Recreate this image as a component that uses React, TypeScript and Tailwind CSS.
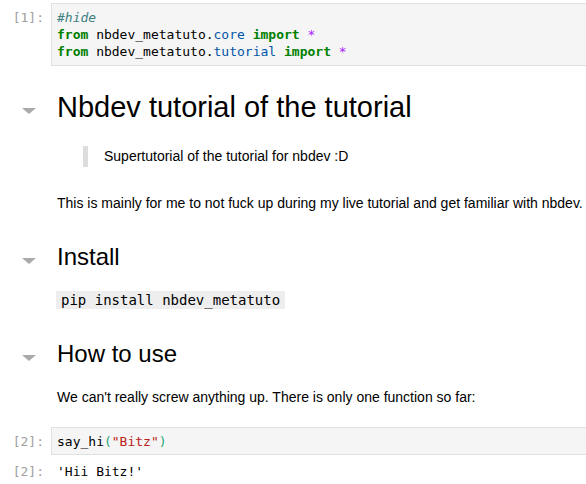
export default function App() {
  const mono = "font-['DejaVu_Sans_Mono',monospace]";
  const sans = "font-['Liberation_Sans',Arial,sans-serif]";

  const Caret = () => (
    <svg width="14" height="6" viewBox="0 0 14 6" className="absolute left-[22px] top-1/2 mt-[1px]">
      <path d="M0 0 L14 0 L7 6 Z" fill="#aaaaaa" />
    </svg>
  );

  return (
    <div className={`h-[484px] w-[586px] overflow-hidden bg-white pt-[3px] text-black ${sans}`}>
      {/* CELL 1 */}
      <div className="flex">
        <div className={`w-[51px] shrink-0 pr-[7px] pt-[6px] text-right text-[13px] leading-[17px] text-[#9e9e9e] ${mono}`}>
          [1]:
        </div>
        <div className={`w-[600px] shrink-0 border border-[#e0e0e0] bg-[#f5f5f5] px-[5px] py-[5px] text-[13px] leading-[17px] whitespace-pre ${mono}`}>
          <div className="italic text-[#408080]">#hide</div>
          <div>
            <span className="font-bold text-[#008000]">from</span> nbdev_metatuto.
            <span className="text-[#0055aa]">core</span> <span className="font-bold text-[#008000]">import</span>{" "}
            <span className="text-[#aa22ff]">*</span>
          </div>
          <div>
            <span className="font-bold text-[#008000]">from</span> nbdev_metatuto.
            <span className="text-[#0055aa]">tutorial</span> <span className="font-bold text-[#008000]">import</span>{" "}
            <span className="text-[#aa22ff]">*</span>
          </div>
        </div>
      </div>

      {/* HEADING */}
      <div className="relative mt-[23px] pl-[57px]">
        <Caret />
        <h1 className="text-[29px] leading-[36px]">Nbdev tutorial of the tutorial</h1>
      </div>

      {/* QUOTE */}
      <div className="ml-[83px] mt-[21px] flex h-[21px] items-center border-l-[5px] border-[#dddddd] pl-[16px] text-[14px]">
        Supertutorial of the tutorial for nbdev :D
      </div>

      <p className="mt-[26px] pl-[57px] text-[14px] leading-[20px] whitespace-nowrap">
        This is mainly for me to not fuck up during my live tutorial and get familiar with nbdev.
      </p>

      {/* INSTALL */}
      <div className="relative mt-[29px] pl-[57px]">
        <Caret />
        <h2 className="text-[24px] leading-[30px]">Install</h2>
      </div>
      <div className="mt-[16px] pl-[56px]">
        <code className={`inline-block bg-[#eeeeee] px-[5px] text-[14px] leading-[18px] ${mono}`}>pip install nbdev_metatuto</code>
      </div>

      {/* HOW TO USE */}
      <div className="relative mt-[27px] pl-[57px]">
        <Caret />
        <h2 className="text-[24px] leading-[30px]">How to use</h2>
      </div>
      <p className="mt-[18px] pl-[57px] text-[14px] leading-[20px]">
        We can't really screw anything up. There is only one function so far:
      </p>

      {/* CELL 2 */}
      <div className="mt-[20px] flex">
        <div className={`w-[51px] shrink-0 pr-[7px] pt-[6px] text-right text-[13px] leading-[17px] text-[#9e9e9e] ${mono}`}>
          [2]:
        </div>
        <div className={`w-[600px] shrink-0 border border-[#e0e0e0] bg-[#f5f5f5] px-[5px] pt-[5px] pb-[4px] text-[13px] leading-[17px] ${mono}`}>
          say_hi<span className="text-[#22a878]">(</span>
          <span className="text-[#ba2121]">"Bitz"</span>
          <span className="text-[#22a878]">)</span>
        </div>
      </div>
      <div className={`mt-[8px] flex text-[13px] leading-[17px] ${mono}`}>
        <div className="w-[51px] shrink-0 pr-[7px] text-right text-[#9e9e9e]">[2]:</div>
        <div className="pl-[6px]">'Hii Bitz!'</div>
      </div>
    </div>
  );
}
